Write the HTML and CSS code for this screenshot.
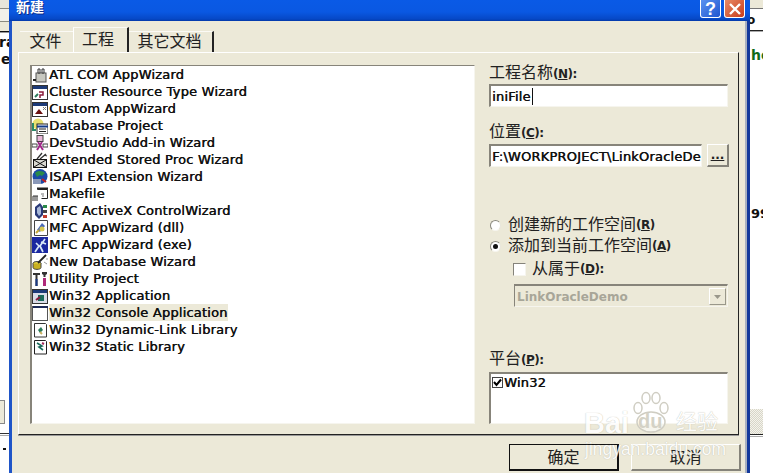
FILE: index.html
```html
<!DOCTYPE html>
<html lang="zh-CN">
<head>
<meta charset="utf-8">
<title>新建</title>
<link rel="stylesheet" href="styles.css">
</head>
<body>
<div class="desktop">
  <div class="bg bg-l1"></div>
  <div class="bg bg-txt bg-ra">ra</div>
  <div class="bg bg-txt bg-e">e</div>
  <div class="bg bg-lbtn"></div>
  <div class="bg bg-lline"></div>
  <div class="bg bg-dash"></div>
  <div class="bg bg-r1"></div>
  <div class="bg bg-r2"></div>
  <div class="bg bg-txt bg-o">o</div>
  <div class="bg bg-txt bg-he">he</div>
  <div class="bg bg-txt bg-99">99</div>
  <div class="bg bg-dither"></div>
  <div class="bg bg-rline"></div>

  <div class="window">
    <div class="titlebar">
      <span class="title">新建</span>
      <span class="tb-btn tb-help">?</span>
      <span class="tb-btn tb-close">
        <svg width="14" height="14" viewBox="0 0 14 14"><path d="M2 2l10 10M12 2L2 12" stroke="#fff" stroke-width="2.4"/></svg>
      </span>
    </div>
    <div class="body">
      <div class="tabs">
        <span class="tab">文件</span>
        <span class="tab tab-on">工程</span>
        <span class="tab tab-sep">其它文档</span>
      </div>
      <div class="panel">
        <ul class="list">
          <li class="row"><svg class="ico" viewBox="0 0 16 16"><rect x="4" y="6" width="10" height="9" fill="#c8c8c0" stroke="#555"/><path d="M6 2h2v4H6zM10 2h2v4h-2z" fill="#fff" stroke="#333"/><path d="M1 13h3" stroke="#222" stroke-width="2"/></svg>ATL COM AppWizard</li>
          <li class="row"><svg class="ico" viewBox="0 0 16 16"><rect x=".5" y="1.5" width="15" height="14" fill="#fff" stroke="#333"/><rect x="1" y="2" width="14" height="3" fill="#1c3a78"/><path d="M7 8h4v3H8v3" fill="none" stroke="#8a1a3a" stroke-width="1.5"/><path d="M3 13l3-3" stroke="#2a7a5a" stroke-width="2"/></svg>Cluster Resource Type Wizard</li>
          <li class="row"><svg class="ico" viewBox="0 0 16 16"><rect x=".5" y="1.5" width="15" height="14" fill="#fff" stroke="#333"/><rect x="1" y="2" width="14" height="3" fill="#1c3a78"/><path d="M3 13l4-5 4 5z" fill="#6a1010"/><path d="M11 6l3 3M14 6l-3 3" stroke="#777"/></svg>Custom AppWizard</li>
          <li class="row"><svg class="ico" viewBox="0 0 16 16"><circle cx="6" cy="6" r="5.5" fill="#e8e070"/><path d="M1 5v7h3" fill="none" stroke="#2a8a6a" stroke-width="2"/><rect x="5" y="6" width="11" height="10" fill="#fff" stroke="#222"/><path d="M5 8.500h11" stroke="#123a88" stroke-width="2"/><path d="M7 11h7M7 13.500h7" stroke="#222"/></svg>Database Project</li>
          <li class="row"><svg class="ico" viewBox="0 0 16 16"><rect x="5" y="0.500" width="6" height="6" fill="#e8b8d8" stroke="#444"/><path d="M0 9h5v3H0zM11 9h5v3h-5z" fill="#fff" stroke="#444"/><path d="M6 7l5 8M10 7l-5 8" stroke="#a02a88" stroke-width="2"/></svg>DevStudio Add-in Wizard</li>
          <li class="row"><svg class="ico" viewBox="0 0 16 16"><rect x="1.500" y="7.500" width="13" height="8" fill="#d8d8d0" stroke="#111"/><path d="M2 8l12 7M14 8L2 15" stroke="#111"/><path d="M5 7l5-6M8 7l6-5M12 3l3 1" stroke="#333" stroke-width="1.300"/></svg>Extended Stored Proc Wizard</li>
          <li class="row"><svg class="ico" viewBox="0 0 16 16"><circle cx="8" cy="7.500" r="7.500" fill="#1a4aa8"/><path d="M3 4c3-3 8-2 10 0l-3 3-2-1-3 2z" fill="#2a8a4a"/><path d="M1 10h8v5H1z" fill="#8a98b8"/><path d="M10 10l4 3" stroke="#c02020" stroke-width="2"/></svg>ISAPI Extension Wizard</li>
          <li class="row"><svg class="ico" viewBox="0 0 16 16"><path d="M5.500 3.500h10v9h-6" fill="#fff" stroke="#222"/><path d="M5 2.500h11" stroke="#222" stroke-width="2"/><path d="M1 10v5M3 10v5M5 10v5M1 10h5" stroke="#333"/><path d="M9 8h3M10 10h2" stroke="#777"/></svg>Makefile</li>
          <li class="row"><svg class="ico" viewBox="0 0 16 16"><path d="M3 4l5-4 3 4v8l-4 4-4-4z" fill="#2a3a78"/><path d="M5 5l3-2 1 3v5l-2 2-2-3z" fill="#a8b8d8"/><rect x="11" y="2" width="4" height="3" fill="#2a8a4a"/><rect x="11" y="7" width="4" height="3" fill="#444"/><rect x="11" y="12" width="4" height="3" fill="#c03a2a"/></svg>MFC ActiveX ControlWizard</li>
          <li class="row"><svg class="ico" viewBox="0 0 16 16"><path d="M2.500 .5h13v15h-13z" fill="#fff" stroke="#444"/><path d="M5 10l5-7 3 3-5 6z" fill="#4a6ab8"/><circle cx="10" cy="9" r="2.500" fill="#d8c850"/><path d="M4 13l3-3" stroke="#c8a838" stroke-width="2"/></svg>MFC AppWizard (dll)</li>
          <li class="row"><svg class="ico" viewBox="0 0 16 16"><rect width="16" height="16" fill="#1a28a0"/><path d="M3 15l4-6-3-3M8 9l5-7M8 9l3 6M9 5l5 2" stroke="#d8e8f8" stroke-width="1.700" fill="none"/></svg>MFC AppWizard (exe)</li>
          <li class="row"><svg class="ico" viewBox="0 0 16 16"><ellipse cx="5" cy="9.500" rx="4" ry="2" fill="#e8d840" stroke="#444"/><path d="M1 9.500v4c0 2.500 8 2.500 8 0v-4" fill="#c8b020" stroke="#444"/><path d="M6 9l8-8" stroke="#222" stroke-width="1.800"/><path d="M12 8l3 2M14 5l2 0" stroke="#999"/></svg>New Database Wizard</li>
          <li class="row"><svg class="ico" viewBox="0 0 16 16"><path d="M1 2h7v2H5.500v11h-2V4H1z" fill="#333"/><path d="M10 1h5v2l-1.500 1v2H11.500V4L10 3z" fill="#333"/><rect x="11" y="7" width="3" height="8" fill="#b02a7a"/><path d="M3.500 8h2v7h-2z" fill="#1a3a88"/></svg>Utility Project</li>
          <li class="row"><svg class="ico" viewBox="0 0 16 16"><rect x=".5" y="1.500" width="15" height="14" fill="#d8dce8" stroke="#333"/><rect x="1" y="2" width="14" height="3" fill="#1c3a78"/><rect x="6" y="7" width="6" height="6" fill="#1a6a5a"/><path d="M4 12l4-3" stroke="#8a1a3a" stroke-width="2"/></svg>Win32 Application</li>
          <li class="row"><svg class="ico" viewBox="0 0 16 16"><rect x=".5" y="1.500" width="15" height="14" fill="#fff" stroke="#555"/><rect x="1" y="1" width="15" height="2" fill="#1c2a58"/></svg><span class="sel">Win32 Console Application</span></li>
          <li class="row"><svg class="ico" viewBox="0 0 16 16"><path d="M2.500 1.500h11l1 1v12.500h-12z" fill="#fff" stroke="#333"/><path d="M6 8l3-3 2 3-3 3z" fill="#2a7a5a"/><path d="M8 10l2 2" stroke="#c8b060" stroke-width="2"/></svg>Win32 Dynamic-Link Library</li>
          <li class="row"><svg class="ico" viewBox="0 0 16 16"><path d="M2.500 1.500h11l1 1v12.500h-12z" fill="#fff" stroke="#222"/><path d="M5 4l5 3-3 1 4 3" fill="none" stroke="#1a6a5a" stroke-width="1.600"/><path d="M10 4l2 1" stroke="#a02a5a" stroke-width="2"/></svg>Win32 Static Library</li>
        </ul>
        <div class="side">
          <label class="lbl lbl-name">工程名称<b class="key">(<u>N</u>):</b></label>
          <div class="field">iniFile<i class="caret"></i></div>
          <label class="lbl lbl-loc">位置<b class="key">(<u>C</u>):</b></label>
          <div class="loc">
            <div class="field field-loc"><span>F:\WORKPROJECT\LinkOracleDemo</span></div>
            <span class="browse"><u>...</u></span>
          </div>
          <div class="opt opt-first"><span class="radio"></span>创建新的工作空间<b class="key">(<u>R</u>)</b></div>
          <div class="opt opt-next"><span class="radio radio-on"></span>添加到当前工作空间<b class="key">(<u>A</u>)</b></div>
          <div class="opt opt-dep"><span class="check"></span>从属于<b class="key">(<u>D</u>):</b></div>
          <div class="combo"><span>LinkOracleDemo</span><span class="arrow"><svg width="7" height="4" viewBox="0 0 7 4"><path d="M0 0h7L3.500 4z" fill="#99978a"/></svg></span></div>
          <label class="lbl lbl-plat">平台<b class="key">(<u>P</u>):</b></label>
          <div class="plat">
            <span class="plat-row"><svg class="plat-check" viewBox="0 0 11 11"><rect x=".5" y=".5" width="10" height="10" fill="#fff" stroke="#444"/><path d="M2 5l2.500 3L9 2.500" fill="none" stroke="#000" stroke-width="2"/></svg>Win32</span>
          </div>
        </div>
      </div>
      <div class="actions">
        <span class="btn btn-def">确定</span>
        <span class="btn">取消</span>
      </div>
    </div>
  </div>

  <div class="mark">
    <svg class="mark-paw" width="44" height="44" viewBox="0 0 44 44"><g fill="#fff" fill-opacity=".55" stroke="#cfcdc2" stroke-width="1.500"><ellipse cx="22" cy="31" rx="14" ry="10"/><ellipse cx="9" cy="17" rx="4" ry="5.500"/><ellipse cx="17" cy="7" rx="4" ry="5.500"/><ellipse cx="27" cy="7" rx="4" ry="5.500"/><ellipse cx="35" cy="17" rx="4" ry="5.500"/></g></svg>
    <span class="mark-bai">Bai</span><span class="mark-du">du</span><span class="mark-jy">经验</span>
    <span class="mark-url">jingyan.baidu.com</span>
  </div>
</div>
</body>
</html>
```

FILE: styles.css
```css
* { box-sizing: border-box; }
html, body { margin: 0; padding: 0; background: #fff; overflow: hidden; }
.desktop {
  position: relative;
  width: 763px;
  height: 473px;
  overflow: hidden;
  background: #fff;
  font-family: "DejaVu Sans", "Noto Sans CJK SC", sans-serif;
  color: #111;
}

/* fragments of the windows behind the dialog */
.bg { position: absolute; }
.bg-txt { font-weight: 700; font-size: 14px; line-height: 14px; color: #111; }
.bg-l1 {
  left: 0;
  top: 0;
  width: 10px;
  height: 33px;
  background: linear-gradient(#e8e6da 0 8px, #8a8a80 8px 9px, #f2f1ea 9px 21px, #8a8a80 21px 22px, #ece9d8 22px 31px, #111 31px 32px, #999 32px 33px);
}
.bg-ra { left: -1px; top: 35px; }
.bg-e { left: 1px; top: 52px; }
.bg-lbtn { left: 0; top: 400px; width: 5px; height: 24px; background: #ece9d8; border: 1px solid #888; border-left: 0; }
.bg-lline { left: 0; top: 433px; width: 10px; height: 3px; border-top: 1px solid #333; border-bottom: 1px solid #aaa; }
.bg-dash { left: 3px; top: 448px; width: 3px; height: 2px; background: #111; }
.bg-r1 { left: 749px; top: 0; width: 14px; height: 9px; background: #ece9d8; border-bottom: 1px solid #777; }
.bg-r2 { left: 749px; top: 30px; width: 14px; height: 2px; background: #222; border-bottom: 1px solid #aaa; }
.bg-o { left: 747px; top: 13px; font-size: 12px; }
.bg-he { left: 751px; top: 48px; color: #0f6a1a; }
.bg-99 { left: 751px; top: 207px; font-size: 13px; }
.bg-dither { left: 749px; top: 409px; width: 14px; height: 25px; background: repeating-conic-gradient(#d8d6c8 0 25%, #f4f3ec 0 50%) 0 0 / 2px 2px; }
.bg-rline { left: 749px; top: 434px; width: 14px; height: 3px; border-top: 1px solid #222; border-bottom: 1px solid #aaa; }

/* dialog window */
.window {
  position: absolute;
  left: 9px;
  top: 0;
  width: 741px;
  height: 473px;
  display: flex;
  flex-direction: column;
  background: #0f3fb0;
  border-left: 3px solid #1f55c8;
  border-right: 3px solid #12389c;
}
.titlebar {
  height: 21px;
  flex: none;
  display: flex;
  align-items: flex-start;
  gap: 3px;
  margin-left: -3px;
  margin-right: -3px;
  padding: 0 5px 0 7px;
  background: linear-gradient(#0a5ae6 0, #0a58e2 12px, #0648c6 19px, #0338a8 21px);
}
.title {
  font-size: 14px;
  font-weight: 700;
  line-height: 15px;
  color: #fff;
  margin-right: auto;
  text-shadow: 1px 1px 0 #0a2a88;
}
.tb-btn {
  width: 21px;
  height: 18px;
  display: flex;
  align-items: center;
  justify-content: center;
  border: 1px solid #fff;
  border-top: 0;
  border-radius: 0 0 3px 3px;
}
.tb-help {
  background: linear-gradient(135deg, #5a92f0, #1f55d0);
  color: #fff;
  font: 700 18px/18px "Liberation Sans", sans-serif;
}
.tb-close { background: linear-gradient(135deg, #e88a66, #c83c1c); }

.body {
  flex: 1;
  display: flex;
  flex-direction: column;
  min-height: 0;
  background: #ece9d8;
  margin-right: 2px;
  box-shadow: 2px 0 0 #a8b0c0;
}
.tabs {
  height: 31px;
  flex: none;
  display: flex;
  align-items: flex-end;
  padding-left: 8px;
  font-size: 16px;
  color: #222;
}
.tab {
  height: 21px;
  width: 53px;
  padding-right: 2px;
  line-height: 20px;
  text-align: center;
  border-top: 1px solid #fbfaf5;
}
.tab-on {
  height: 25px;
  width: 56px;
  padding-right: 5px;
  line-height: 24px;
  border-left: 1px solid #fff;
  border-right: 2px solid #222;
}
.tab-sep {
  width: 85px;
  border-right: 2px solid #222;
}
.panel {
  height: 383px;
  flex: none;
  margin-left: 6px;
  margin-right: 6px;
  display: flex;
  gap: 14px;
  padding: 12px 8px 0 11px;
  border-top: 1px solid #fff;
  border-left: 1px solid #fff;
  border-right: 1px solid #222;
  border-bottom: 1px solid #222;
  box-shadow: 0 1px 0 #999;
}

/* project type list */
.list {
  list-style: none;
  margin: 0;
  width: 445px;
  height: 359px;
  flex: none;
  padding: 0;
  background: #fff;
  border-top: 1px solid #87847a;
  border-left: 2px solid #87847a;
  border-right: 1px solid #f6f5ee;
  border-bottom: 1px solid #f6f5ee;
  font-size: 13px;
  letter-spacing: .2px;
}
.row {
  height: 17px;
  display: flex;
  align-items: center;
  gap: 1px;
  white-space: nowrap;
  line-height: 17px;
  color: #111;
  text-shadow: .45px 0 0 #111;
}
.ico { width: 16px; height: 16px; flex: none; }
.sel { background: #ece9d8; padding-right: 1px; }

/* right-hand column */
.side {
  width: 240px;
  flex: none;
  display: flex;
  flex-direction: column;
  font-size: 16px;
  color: #222;
}
.lbl { display: block; height: 18px; line-height: 18px; }
.lbl-name { margin-top: -1px; margin-bottom: 2px; }
.lbl-loc { margin-top: 16px; margin-bottom: 3px; }
.lbl-plat { margin-top: 43px; margin-bottom: 4px; }
.key { font-size: 12px; font-weight: 700; letter-spacing: -.5px; color: #222; }
.field {
  height: 23px;
  width: 239px;
  flex: none;
  background: #fff;
  display: flex;
  align-items: center;
  padding-left: 1px;
  font-size: 13px;
  letter-spacing: .2px;
  color: #111;
  text-shadow: .45px 0 0 #111;
  border-top: 2px solid #87847a;
  border-left: 2px solid #87847a;
  border-right: 1px solid #f6f5ee;
  border-bottom: 1px solid #f6f5ee;
  white-space: nowrap;
  overflow: hidden;
}
.caret { width: 1px; height: 17px; background: #111; margin-left: 1px; }
.loc { display: flex; gap: 5px; }
.field-loc { width: 213px; }
.browse {
  width: 22px;
  height: 23px;
  flex: none;
  background: #ece9d8;
  font-size: 12px;
  font-weight: 700;
  text-align: center;
  line-height: 20px;
  border-top: 1px solid #fff;
  border-left: 1px solid #fff;
  border-right: 2px solid #85837a;
  border-bottom: 2px solid #85837a;
}
.opt {
  height: 18px;
  display: flex;
  align-items: center;
  line-height: 18px;
}
.opt-first { margin-top: 49px; }
.opt-next { margin-top: 3px; }
.opt-dep { margin-top: 5px; padding-left: 24px; }
.radio {
  width: 11px;
  height: 11px;
  flex: none;
  margin: 0 7px 0 1px;
  border-radius: 50%;
  background: #fff;
  border: 1px solid;
  border-color: #8a887e #e8e6da #f6f5ee #8a887e;
  display: flex;
  align-items: center;
  justify-content: center;
}
.radio-on::after { content: ""; width: 5px; height: 5px; border-radius: 50%; background: #111; }
.check {
  width: 13px;
  height: 13px;
  flex: none;
  margin-right: 6px;
  background: #fff;
  border: 1px solid;
  border-color: #85837a #f6f5ee #f6f5ee #85837a;
}
.combo {
  height: 23px;
  margin-top: 6px;
  margin-left: 25px;
  width: 214px;
  flex: none;
  display: flex;
  align-items: center;
  justify-content: space-between;
  padding: 1px 0 0 2px;
  font-size: 12px;
  font-weight: 700;
  color: #a8a698;
  border-top: 2px solid #87847a;
  border-left: 1px solid #87847a;
  border-right: 1px solid #f6f5ee;
  border-bottom: 1px solid #f6f5ee;
}
.arrow {
  width: 17px;
  height: 17px;
  margin-right: 1px;
  display: flex;
  align-items: center;
  justify-content: center;
  border: 1px solid;
  border-color: #fff #99978a #99978a #fff;
}
.plat {
  width: 239px;
  height: 52px;
  flex: none;
  background: #fff;
  padding: 0 0 0 1px;
  font-size: 13px;
  letter-spacing: .2px;
  color: #111;
  text-shadow: .45px 0 0 #111;
  border-top: 2px solid #87847a;
  border-left: 2px solid #87847a;
  border-right: 1px solid #f6f5ee;
  border-bottom: 1px solid #f6f5ee;
}
.plat-row { display: flex; align-items: center; gap: 1px; height: 16px; }
.plat-check { width: 11px; height: 11px; flex: none; }

/* OK / Cancel */
.actions {
  flex: 1;
  display: flex;
  gap: 12px;
  padding: 9px 0 0 497px;
}
.btn {
  width: 110px;
  height: 27px;
  flex: none;
  text-align: center;
  font-size: 16px;
  line-height: 26px;
  color: #222;
  background: #ece9d8;
  border-top: 1px solid #fff;
  border-left: 1px solid #fff;
  border-right: 2px solid #85837a;
  border-bottom: 2px solid #85837a;
}
.btn-def { border: 1px solid #111; border-right: 2px solid #111; border-bottom: 2px solid #111; }

/* watermark */
.mark { position: absolute; left: 0; top: 0; width: 763px; height: 473px; pointer-events: none; color: #fff; }
.mark > * { position: absolute; }
.mark-paw { left: 629px; top: 391px; }
.mark-bai, .mark-jy, .mark-url { text-shadow: 0 0 1px #a8a698; opacity: .85; }
.mark-bai { left: 584px; top: 407px; font: 700 29px/32px "Liberation Sans", sans-serif; }
.mark-du { left: 638px; top: 410px; font: 700 20px/22px "Liberation Sans", sans-serif; color: #d4d2c6; }
.mark-jy { left: 676px; top: 408px; font: 400 21px/24px "Noto Sans CJK SC", sans-serif; }
.mark-url { left: 585px; top: 439px; font: 400 17.500px/20px "Liberation Sans", sans-serif; }
```
